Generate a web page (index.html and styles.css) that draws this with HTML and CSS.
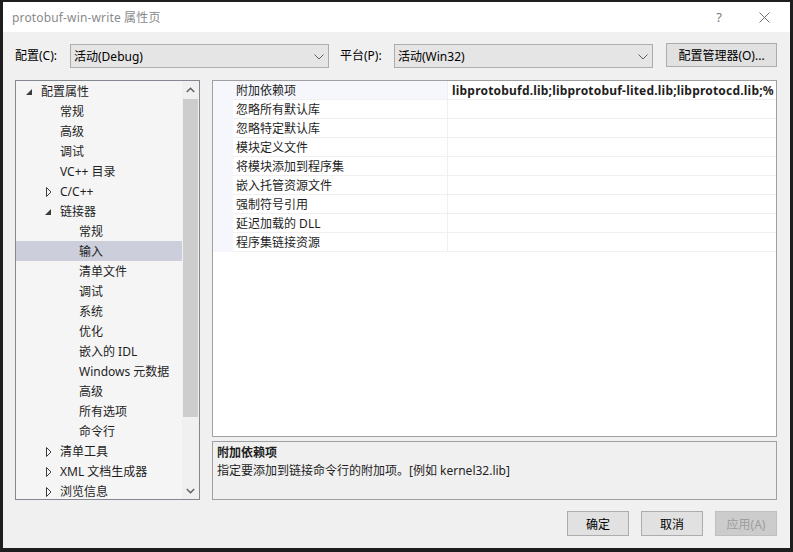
FILE: index.html
```html
<!DOCTYPE html>
<html lang="zh-CN">
<head>
<meta charset="utf-8">
<title>protobuf-win-write 属性页</title>
<link rel="stylesheet" href="styles.css">
</head>
<body>
<div class="window">
  <div class="titlebar">
    <span class="title">protobuf-win-write 属性页</span>
    <span class="help">?</span>
    <span class="close"><svg width="11" height="11" viewBox="0 0 11 11"><path d="M0.5 0.5 L10.5 10.5 M10.5 0.5 L0.5 10.5" stroke="#6e6e6e" stroke-width="1" fill="none"/></svg></span>
  </div>
  <div class="body">
    <div class="config-row">
      <span class="lbl lbl-config">配置(C):</span>
      <div class="combo"><span>活动(Debug)</span><svg class="chev" width="10" height="6" viewBox="0 0 10 6"><path d="M0.5 0.5 L5 5 L9.5 0.5" stroke="#606060" fill="none"/></svg></div>
      <span class="lbl lbl-platform">平台(P):</span>
      <div class="combo"><span>活动(Win32)</span><svg class="chev" width="10" height="6" viewBox="0 0 10 6"><path d="M0.5 0.5 L5 5 L9.5 0.5" stroke="#606060" fill="none"/></svg></div>
      <button class="btn btn-manager">配置管理器(O)...</button>
    </div>
    <div class="main">
      <div class="tree">
        <ul class="tree-list">
          <li class="node l0"><span class="tw"><svg width="7" height="7" viewBox="0 0 7 7"><polygon points="6,0 6,6 0,6" fill="#3c3c3c"/></svg></span>配置属性</li>
          <li class="node l1"><span class="tw"></span>常规</li>
          <li class="node l1"><span class="tw"></span>高级</li>
          <li class="node l1"><span class="tw"></span>调试</li>
          <li class="node l1"><span class="tw"></span>VC++ 目录</li>
          <li class="node l1"><span class="tw tw-c"><svg width="6" height="10" viewBox="0 0 6 10"><polygon points="0.5,0.5 5,5 0.5,9.5" fill="none" stroke="#3c3c3c"/></svg></span>C/C++</li>
          <li class="node l1"><span class="tw"><svg width="7" height="7" viewBox="0 0 7 7"><polygon points="6,0 6,6 0,6" fill="#3c3c3c"/></svg></span>链接器</li>
          <li class="node l2"><span class="tw"></span>常规</li>
          <li class="node l2 selected"><span class="tw"></span>输入</li>
          <li class="node l2"><span class="tw"></span>清单文件</li>
          <li class="node l2"><span class="tw"></span>调试</li>
          <li class="node l2"><span class="tw"></span>系统</li>
          <li class="node l2"><span class="tw"></span>优化</li>
          <li class="node l2"><span class="tw"></span>嵌入的 IDL</li>
          <li class="node l2"><span class="tw"></span>Windows 元数据</li>
          <li class="node l2"><span class="tw"></span>高级</li>
          <li class="node l2"><span class="tw"></span>所有选项</li>
          <li class="node l2"><span class="tw"></span>命令行</li>
          <li class="node l1"><span class="tw tw-c"><svg width="6" height="10" viewBox="0 0 6 10"><polygon points="0.5,0.5 5,5 0.5,9.5" fill="none" stroke="#3c3c3c"/></svg></span>清单工具</li>
          <li class="node l1"><span class="tw tw-c"><svg width="6" height="10" viewBox="0 0 6 10"><polygon points="0.5,0.5 5,5 0.5,9.5" fill="none" stroke="#3c3c3c"/></svg></span>XML 文档生成器</li>
          <li class="node l1"><span class="tw tw-c"><svg width="6" height="10" viewBox="0 0 6 10"><polygon points="0.5,0.5 5,5 0.5,9.5" fill="none" stroke="#3c3c3c"/></svg></span>浏览信息</li>
        </ul>
        <div class="scrollbar">
          <div class="sb-arrow"><svg width="9" height="6" viewBox="0 0 9 6"><path d="M0.8 5 L4.5 1.3 L8.2 5" stroke="#606060" stroke-width="1.5" fill="none"/></svg></div>
          <div class="sb-track"><div class="sb-thumb"></div></div>
          <div class="sb-arrow"><svg width="9" height="6" viewBox="0 0 9 6"><path d="M0.8 1 L4.5 4.7 L8.2 1" stroke="#606060" stroke-width="1.5" fill="none"/></svg></div>
        </div>
      </div>
      <div class="right">
        <div class="grid">
          <div class="row first"><span class="margin"></span><span class="name">附加依赖项</span><span class="value">libprotobufd.lib;libprotobuf-lited.lib;libprotocd.lib;%</span></div>
          <div class="row"><span class="margin"></span><span class="name">忽略所有默认库</span><span class="value"></span></div>
          <div class="row"><span class="margin"></span><span class="name">忽略特定默认库</span><span class="value"></span></div>
          <div class="row"><span class="margin"></span><span class="name">模块定义文件</span><span class="value"></span></div>
          <div class="row"><span class="margin"></span><span class="name">将模块添加到程序集</span><span class="value"></span></div>
          <div class="row"><span class="margin"></span><span class="name">嵌入托管资源文件</span><span class="value"></span></div>
          <div class="row"><span class="margin"></span><span class="name">强制符号引用</span><span class="value"></span></div>
          <div class="row"><span class="margin"></span><span class="name">延迟加载的 DLL</span><span class="value"></span></div>
          <div class="row"><span class="margin"></span><span class="name">程序集链接资源</span><span class="value"></span></div>
        </div>
        <div class="desc">
          <div class="desc-title">附加依赖项</div>
          <div class="desc-text">指定要添加到链接命令行的附加项。[例如 kernel32.lib]</div>
        </div>
      </div>
    </div>
    <div class="footer">
      <button class="btn btn-foot">确定</button>
      <button class="btn btn-foot">取消</button>
      <button class="btn btn-foot disabled">应用(A)</button>
    </div>
  </div>
</div>
</body>
</html>
```
FILE: styles.css
```css
* { box-sizing: border-box; }
html, body { margin: 0; padding: 0; }
body {
  width: 793px;
  height: 552px;
  overflow: hidden;
  background: #1e1e1e;
  font-family: "Noto Sans", "Noto Sans CJK SC", sans-serif;
  font-size: 12px;
  color: #000;
}
.window {
  margin: 2px 0 0 3px;
  width: 787px;
  height: 546px;
  background: #f0f0f0;
  display: flex;
  flex-direction: column;
}
.titlebar {
  height: 30px;
  flex: none;
  background: #fff;
  display: flex;
  align-items: center;
  padding-left: 9px;
  padding-right: 20px;
}
.title { flex: 1; color: #8a8a8a; font-size: 12px; letter-spacing: 0.15px; }
.help { width: 10px; text-align: center; color: #7a7a7a; font-size: 13px; margin-right: 35px; }
.close { display: flex; width: 11px; height: 11px; }
.body {
  flex: 1;
  display: flex;
  flex-direction: column;
  padding: 12px 13px 0 12px;
}
.config-row {
  display: flex;
  align-items: flex-start;
  height: 24px;
}
.lbl { line-height: 24px; }
.lbl-config { width: 55px; }
.lbl-platform { width: 54px; margin-left: 11px; }
.combo {
  width: 259px;
  height: 24px;
  border: 1px solid #adadad;
  background: #e5e5e5;
  display: flex;
  align-items: center;
  justify-content: space-between;
  padding: 0 4px 0 3px;
}
.chev { margin-top: 1px; }
.btn {
  font: inherit;
  color: #000;
  background: #e1e1e1;
  border: 1px solid #adadad;
  padding: 0;
  height: 24px;
}
.btn-manager { width: 111px; margin-left: 13px; margin-top: -1px; }
.main {
  margin-top: 12px;
  display: flex;
  gap: 12px;
  height: 420px;
}
.tree {
  width: 185px;
  height: 420px;
  border: 1px solid #828790;
  background: #f5f5f5;
  display: flex;
  overflow: hidden;
}
.tree-list {
  list-style: none;
  margin: 0;
  padding: 0;
  width: 166px;
  overflow: hidden;
}
.node {
  height: 20px;
  line-height: 20px;
  padding-top: 1px;
  display: flex;
  align-items: center;
  color: #1e1e1e;
  white-space: nowrap;
}
.node.l0 { padding-left: 6px; }
.node.l1 { padding-left: 25px; }
.node.l2 { padding-left: 44px; }
.node.selected { background: #cccedb; }
.tw {
  width: 19px;
  height: 19px;
  display: flex;
  align-items: center;
  padding-left: 4px;
  padding-top: 1px;
}
.tw-c { padding-left: 5px; padding-top: 0; }
.scrollbar {
  width: 17px;
  margin-left: auto;
  background: #f0f0f0;
  display: flex;
  flex-direction: column;
}
.sb-arrow {
  height: 17px;
  display: flex;
  align-items: center;
  justify-content: center;
}
.sb-track { flex: 1; padding-top: 1px; }
.sb-thumb { height: 318px; margin: 0 1px; background: #cdcdcd; }
.right {
  flex: 1;
  display: flex;
  flex-direction: column;
  gap: 4px;
}
.grid {
  height: 357px;
  border: 1px solid #a0a0a0;
  background: #fff;
}
.row {
  display: grid;
  grid-template-columns: 20px 215px 1fr;
  height: 19px;
}
.row .margin { background: #f5f7fc; }
.row .name {
  padding-left: 3px;
  padding-top: 1px;
  line-height: 17px;
  border-bottom: 1px solid #f0f0f0;
  border-right: 1px solid #f0f0f0;
  white-space: nowrap;
  color: #1e1e1e;
}
.row.first .name { background: #f5f7fc; }
.row .value {
  padding-left: 4px;
  padding-top: 1px;
  line-height: 17px;
  border-bottom: 1px solid #f0f0f0;
  white-space: nowrap;
  overflow: hidden;
  font-weight: bold;
  letter-spacing: 0.2px;
  color: #1e1e1e;
}
.desc {
  height: 59px;
  border: 1px solid #a0a0a0;
  background: #f0f0f0;
  padding: 2px 4px;
  line-height: 18px;
  color: #1e1e1e;
}
.desc-title { font-weight: bold; }
.footer {
  margin-top: 11px;
  display: flex;
  justify-content: flex-end;
  gap: 12px;
}
.btn-foot { width: 62px; height: 25px; }
.btn-foot.disabled { background: #cccccc; border-color: #bfbfbf; color: #9d9d9d; }
```
